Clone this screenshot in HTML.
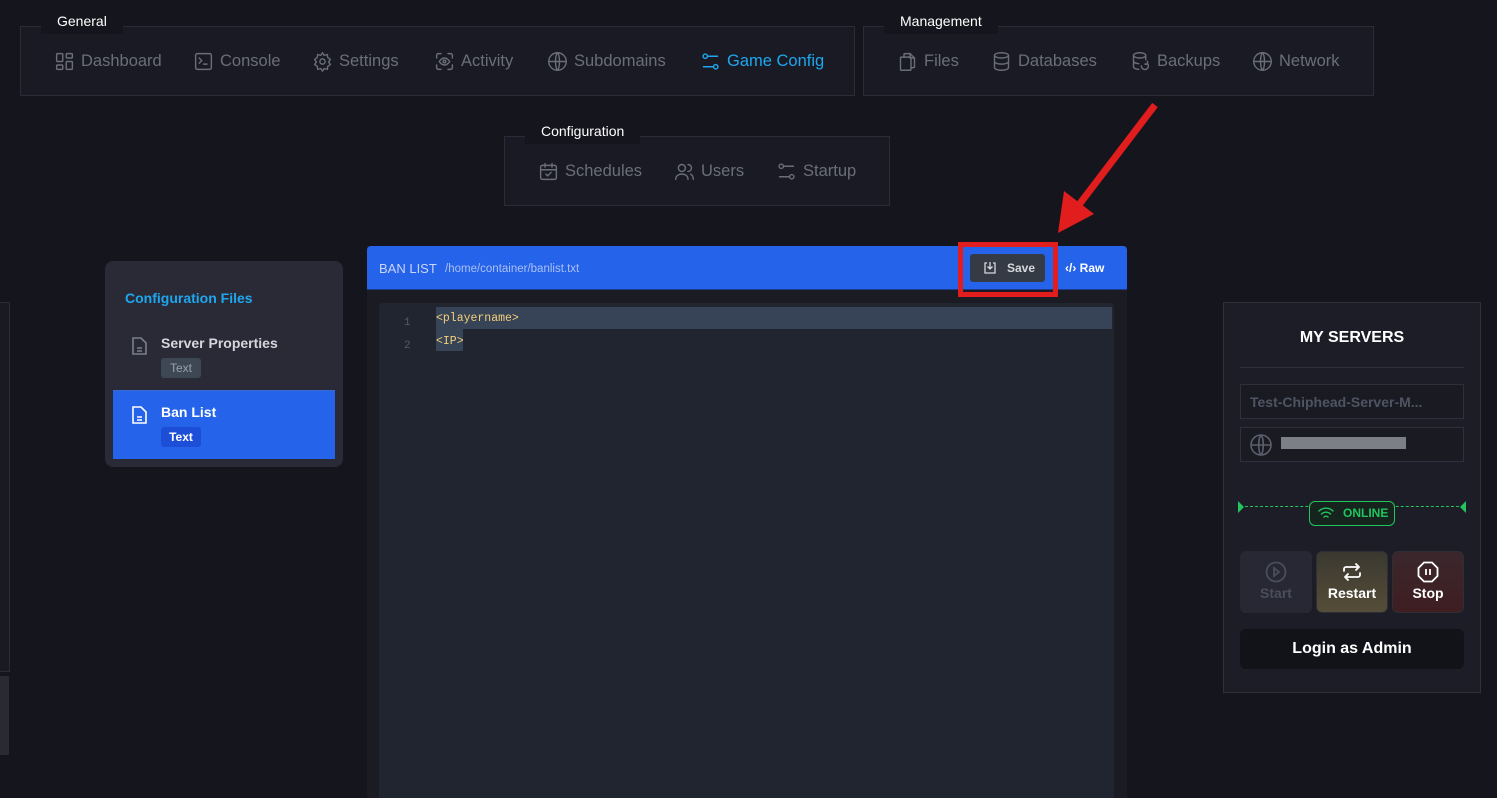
<!DOCTYPE html>
<html><head><meta charset="utf-8"><style>
*{box-sizing:border-box;margin:0;padding:0}
body{width:1497px;height:798px;overflow:hidden;background:#15151d;font-family:"Liberation Sans",sans-serif;position:relative;color:#6b6e7a}
.a{position:absolute}
.box{position:absolute;border:1px solid #2b2c37;background:#191a23}
.leg{position:absolute;background:#15151d;color:#fff;font-size:14px;padding:0 16px;height:26px;line-height:26px}
.ni{position:absolute;display:flex;align-items:center;gap:6px;font-size:16.5px;color:#6b6e7a;height:24px}
.ni svg{width:21px;height:21px;fill:none;stroke:currentColor;stroke-width:1.6;stroke-linecap:round;stroke-linejoin:round}
</style></head><body>

<!-- General -->
<div class="box" style="left:20px;top:26px;width:835px;height:70px"></div>
<div class="leg" style="left:41px;top:8px;">General</div>
<div class="ni" style="left:54px;top:49px"><svg viewBox="0 0 24 24"><rect x="3" y="3" width="7" height="9" rx="1"/><rect x="14" y="3" width="7" height="5" rx="1"/><rect x="14" y="12" width="7" height="9" rx="1"/><rect x="3" y="16" width="7" height="5" rx="1"/></svg>Dashboard</div>
<div class="ni" style="left:193px;top:49px"><svg viewBox="0 0 24 24"><rect x="3" y="3" width="18" height="18" rx="2"/><path d="M7 8l3 3-3 3M12 15h4"/></svg>Console</div>
<div class="ni" style="left:312px;top:49px"><svg viewBox="0 0 24 24"><circle cx="12" cy="12" r="3"/><path d="M12 2l2 3 3.5-1 .5 3.5 3 2-2 3 2 3-3 2-.5 3.5-3.5-1-2 3-2-3-3.5 1-.5-3.5-3-2 2-3-2-3 3-2 .5-3.5 3.5 1z"/></svg>Settings</div>
<div class="ni" style="left:434px;top:49px"><svg viewBox="0 0 24 24"><path d="M3 8V5a2 2 0 012-2h3M16 3h3a2 2 0 012 2v3M21 16v3a2 2 0 01-2 2h-3M8 21H5a2 2 0 01-2-2v-3"/><path d="M6 12s2.5-4 6-4 6 4 6 4-2.5 4-6 4-6-4-6-4z"/><circle cx="12" cy="12" r="1.5"/></svg>Activity</div>
<div class="ni" style="left:547px;top:49px"><svg viewBox="0 0 24 24"><circle cx="12" cy="12" r="10"/><path d="M2 12h20M12 2c3 3 3 17 0 20M12 2c-3 3-3 17 0 20"/></svg>Subdomains</div>
<div class="ni" style="left:700px;top:49px;color:#1ea7ef"><svg viewBox="0 0 24 24"><circle cx="6" cy="6" r="2.5"/><path d="M8.5 6H20M4 18h11.5"/><circle cx="18" cy="18" r="2.5"/></svg>Game Config</div>

<!-- Management -->
<div class="box" style="left:863px;top:26px;width:511px;height:70px"></div>
<div class="leg" style="left:884px;top:8px;">Management</div>
<div class="ni" style="left:897px;top:49px"><svg viewBox="0 0 24 24"><path d="M8 7V4a1 1 0 011-1h6l5 5v10a1 1 0 01-1 1h-3"/><path d="M15 3v5h5"/><rect x="4" y="7" width="12" height="15" rx="1"/></svg>Files</div>
<div class="ni" style="left:991px;top:49px"><svg viewBox="0 0 24 24"><ellipse cx="12" cy="5" rx="8" ry="3"/><path d="M4 5v14c0 1.7 3.6 3 8 3s8-1.3 8-3V5M4 12c0 1.7 3.6 3 8 3s8-1.3 8-3"/></svg>Databases</div>
<div class="ni" style="left:1130px;top:49px"><svg viewBox="0 0 24 24"><ellipse cx="11" cy="5" rx="7" ry="3"/><path d="M4 5v13c0 1.5 2.5 2.7 6 3M18 5v5M4 11.5c0 1.5 2.5 2.7 6 3"/><path d="M13 17a4 4 0 107-2.5M20 12v3h-3"/></svg>Backups</div>
<div class="ni" style="left:1252px;top:49px"><svg viewBox="0 0 24 24"><circle cx="12" cy="12" r="10"/><path d="M2 12h20M12 2c3 3 3 17 0 20M12 2c-3 3-3 17 0 20"/></svg>Network</div>

<!-- Configuration -->
<div class="box" style="left:504px;top:136px;width:386px;height:70px"></div>
<div class="leg" style="left:525px;top:118px;">Configuration</div>
<div class="ni" style="left:538px;top:159px"><svg viewBox="0 0 24 24"><rect x="3" y="5" width="18" height="16" rx="2"/><path d="M3 10h18M8 3v4M16 3v4M9 15l2 2 4-4"/></svg>Schedules</div>
<div class="ni" style="left:674px;top:159px"><svg viewBox="0 0 24 24"><circle cx="9" cy="8" r="4"/><path d="M2 21c0-4 3-6 7-6s7 2 7 6M16 4a4 4 0 010 8M19 15c2 1 3 3 3 6"/></svg>Users</div>
<div class="ni" style="left:776px;top:159px"><svg viewBox="0 0 24 24"><circle cx="6" cy="6" r="2.5"/><path d="M8.5 6H20M4 18h11.5"/><circle cx="18" cy="18" r="2.5"/></svg>Startup</div>

<!-- red arrow -->
<svg class="a" style="left:1040px;top:95px" width="130" height="145" viewBox="0 0 130 145"><path d="M115 10L35 115" stroke="#e11d1d" stroke-width="7"/><path d="M18 138L24 96 54 119z" fill="#e11d1d"/></svg>

<!-- left edge -->
<div class="a" style="left:0;top:302px;width:10px;height:370px;border:1px solid #2b2c37;border-left:none;background:#191a23"></div>
<div class="a" style="left:0;top:676px;width:9px;height:79px;background:#2a2a35"></div>

<!-- config files panel -->
<div class="a" style="left:105px;top:261px;width:238px;height:206px;background:#2a2a36;border-radius:8px"></div>
<div class="a" style="left:125px;top:290px;font-size:14px;font-weight:bold;color:#1ea7ef">Configuration Files</div>
<svg class="a" style="left:131px;top:336px" width="17" height="20" viewBox="0 0 17 20" fill="none" stroke="#7b7f8a" stroke-width="1.6"><path d="M2 2h8l5 5v11H2z"/><path d="M6 12h5M6 15h5"/></svg>
<div class="a" style="left:161px;top:335px;font-size:14px;font-weight:bold;color:#d5d7dc">Server Properties</div>
<div class="a" style="left:161px;top:358px;width:40px;height:20px;background:#3d4854;border-radius:3px;color:#9aa1aa;font-size:12px;text-align:center;line-height:20px">Text</div>
<div class="a" style="left:113px;top:390px;width:222px;height:69px;background:#2563eb;border-top:1px solid #3a6ad0"></div>
<svg class="a" style="left:131px;top:405px" width="17" height="20" viewBox="0 0 17 20" fill="none" stroke="#fff" stroke-width="1.6"><path d="M2 2h8l5 5v11H2z"/><path d="M6 12h5M6 15h5"/></svg>
<div class="a" style="left:161px;top:404px;font-size:14px;font-weight:bold;color:#fff">Ban List</div>
<div class="a" style="left:161px;top:427px;width:40px;height:20px;background:#1d4ed8;border-radius:3px;color:#fff;font-size:12px;text-align:center;line-height:20px;font-weight:bold">Text</div>

<!-- editor -->
<div class="a" style="left:367px;top:246px;width:760px;height:552px;background:#1b1b24"></div>
<div class="a" style="left:367px;top:246px;width:760px;height:44px;background:#2563eb;border-radius:4px 4px 0 0;border-bottom:1px solid #1e3a8a"></div>
<div class="a" style="left:379px;top:261px;font-size:13px;color:#c9d6f5">BAN LIST</div>
<div class="a" style="left:445px;top:263px;font-size:11.5px;color:#aac0f0">/home/container/banlist.txt</div>
<div class="a" style="left:958px;top:242px;width:100px;height:55px;border:5px solid #e11d1d"></div>
<div class="a" style="left:970px;top:254px;width:75px;height:28px;background:#343b45;border-radius:3px;color:#d5d8dd;font-size:12px;font-weight:bold;line-height:28px;padding-left:37px">Save</div>
<svg class="a" style="left:983px;top:261px" width="14" height="14" viewBox="0 0 14 14" fill="none" stroke="#d5d8dd" stroke-width="1.3"><path d="M4 2H2v10h10V2h-2M7 1v7M4.5 5.5L7 8l2.5-2.5"/></svg>
<div class="a" style="left:1065px;top:261px;font-size:12px;font-weight:bold;color:#fff">‹/› Raw</div>
<div class="a" style="left:379px;top:303px;width:735px;height:495px;background:#212530;border-radius:4px 4px 0 0"></div>
<div class="a" style="left:436px;top:307px;width:676px;height:22px;background:#374457"></div>
<div class="a" style="left:436px;top:329px;width:27px;height:22px;background:#374457"></div>
<div class="a" style="left:404px;top:312px;font-family:'Liberation Mono',monospace;font-size:11px;color:#555b68;line-height:23px">1<br>2</div>
<div class="a" style="left:436px;top:307px;font-family:'Liberation Mono',monospace;font-size:11.5px;color:#f3cf7a;line-height:23px">&lt;playername&gt;<br>&lt;IP&gt;</div>

<!-- my servers -->
<div class="a" style="left:1223px;top:302px;width:258px;height:391px;background:#1c1d26;border:1px solid #2e303b"></div>
<div class="a" style="left:1223px;top:329px;width:258px;text-align:center;font-size:16px;font-weight:bold;color:#fff">MY SERVERS</div>
<div class="a" style="left:1240px;top:367px;width:224px;height:1px;background:#2e303b"></div>
<div class="a" style="left:1240px;top:384px;width:224px;height:35px;border:1px solid #2e303b;background:#191a22;font-size:14px;font-weight:bold;color:#4f5462;padding:9px 0 0 9px">Test-Chiphead-Server-M...</div>
<div class="a" style="left:1240px;top:427px;width:224px;height:35px;border:1px solid #2e303b;background:#191a22"></div>
<svg class="a" style="left:1249px;top:433px" width="24" height="24" viewBox="0 0 24 24" fill="none" stroke="#5c606c" stroke-width="1.6"><circle cx="12" cy="12" r="10"/><path d="M2 12h20M12 2c3 3 3 17 0 20M12 2c-3 3-3 17 0 20"/></svg>
<div class="a" style="left:1281px;top:437px;width:125px;height:12px;background:#7d7f86"></div>
<div class="a" style="left:1240px;top:506px;width:224px;border-top:1.5px dashed #22c55e"></div>
<svg class="a" style="left:1237px;top:500px" width="230" height="14"><path d="M1 1v12l6-6z M229 1v12l-6-6z" fill="#22c55e"/></svg>
<div class="a" style="left:1309px;top:501px;width:86px;height:25px;background:#16241e;border:1.5px solid #22c55e;border-radius:6px;color:#22c55e;font-size:12px;font-weight:bold;line-height:22px;padding-left:33px">ONLINE</div>
<svg class="a" style="left:1318px;top:506px" width="16" height="14" viewBox="0 0 16 14" fill="none" stroke="#22c55e" stroke-width="1.4" stroke-linecap="round"><path d="M1 5a10 10 0 0114 0M3.5 8a6.5 6.5 0 019 0M6 11a3 3 0 014 0"/></svg>
<div class="a" style="left:1240px;top:551px;width:72px;height:62px;background:#272834;border-radius:6px"></div>
<div class="a" style="left:1316px;top:551px;width:72px;height:62px;background:linear-gradient(#3a3830,#554d38);border-radius:6px;border:1px solid #2e2e34"></div>
<div class="a" style="left:1392px;top:551px;width:72px;height:62px;background:linear-gradient(#3a272c,#3f1e22);border-radius:6px;border:1px solid #2e2e34"></div>
<svg class="a" style="left:1265px;top:561px" width="22" height="22" viewBox="0 0 22 22" fill="none" stroke="#4b4e5a" stroke-width="1.8"><circle cx="11" cy="11" r="9.5"/><path d="M9 7l5 4-5 4z"/></svg>
<svg class="a" style="left:1341px;top:561px" width="22" height="22" viewBox="0 0 22 22" fill="none" stroke="#fff" stroke-width="1.8" stroke-linecap="round" stroke-linejoin="round"><path d="M3 10V8a2 2 0 012-2h13M15 3l3 3-3 3M19 12v2a2 2 0 01-2 2H4M7 19l-3-3 3-3"/></svg>
<svg class="a" style="left:1417px;top:561px" width="22" height="22" viewBox="0 0 22 22" fill="none" stroke="#fff" stroke-width="1.8"><path d="M7 1.5h8l5.5 5.5v8L15 20.5H7L1.5 15V7z"/><path d="M9 8v6M13 8v6"/></svg>
<div class="a" style="left:1240px;top:585px;width:72px;text-align:center;font-size:14px;font-weight:bold;color:#4b4e5a">Start</div>
<div class="a" style="left:1316px;top:585px;width:72px;text-align:center;font-size:14px;font-weight:bold;color:#fff">Restart</div>
<div class="a" style="left:1392px;top:585px;width:72px;text-align:center;font-size:14px;font-weight:bold;color:#fff">Stop</div>
<div class="a" style="left:1240px;top:629px;width:224px;height:40px;background:#121219;border-radius:6px;text-align:center;line-height:40px;font-size:16px;font-weight:bold;color:#fff">Login as Admin</div>
</body></html>
